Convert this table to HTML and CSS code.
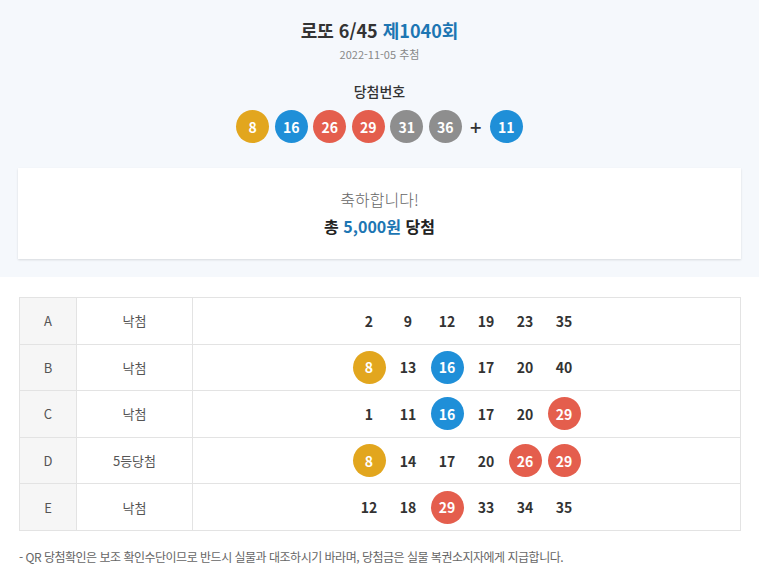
FILE: index.html
```html
<!DOCTYPE html>
<html lang="ko">
<head>
<meta charset="utf-8">
<link rel="stylesheet" href="styles.css">
</head>
<body>
<section class="top">
  <h1 class="title">로또 6/45 <span class="round">제1040회</span></h1>
  <div class="date">2022-11-05 추첨</div>
  <div class="label">당첨번호</div>
  <div class="balls">
    <span class="ball y">8</span>
    <span class="ball b">16</span>
    <span class="ball r">26</span>
    <span class="ball r">29</span>
    <span class="ball g">31</span>
    <span class="ball g">36</span>
    <span class="plus">+</span>
    <span class="ball b">11</span>
  </div>
  <div class="card">
    <div class="congrats">축하합니다!</div>
    <div class="total">총 <span class="amount">5,000원</span> 당첨</div>
  </div>
</section>
<div class="tablewrap">
<table class="games">
  <tr><td class="c1">A</td><td class="c2">낙첨</td><td class="c3"><div class="nums"><span class="n">2</span><span class="n">9</span><span class="n">12</span><span class="n">19</span><span class="n">23</span><span class="n">35</span></div></td></tr>
  <tr><td class="c1">B</td><td class="c2">낙첨</td><td class="c3"><div class="nums"><span class="n ball y">8</span><span class="n">13</span><span class="n ball b">16</span><span class="n">17</span><span class="n">20</span><span class="n">40</span></div></td></tr>
  <tr><td class="c1">C</td><td class="c2">낙첨</td><td class="c3"><div class="nums"><span class="n">1</span><span class="n">11</span><span class="n ball b">16</span><span class="n">17</span><span class="n">20</span><span class="n ball r">29</span></div></td></tr>
  <tr><td class="c1">D</td><td class="c2">5등당첨</td><td class="c3"><div class="nums"><span class="n ball y">8</span><span class="n">14</span><span class="n">17</span><span class="n">20</span><span class="n ball r">26</span><span class="n ball r">29</span></div></td></tr>
  <tr><td class="c1">E</td><td class="c2">낙첨</td><td class="c3"><div class="nums"><span class="n">12</span><span class="n">18</span><span class="n ball r">29</span><span class="n">33</span><span class="n">34</span><span class="n">35</span></div></td></tr>
</table>
</div>
<p class="note">- QR 당첨확인은 보조 확인수단이므로 반드시 실물과 대조하시기 바라며, 당첨금은 실물 복권소지자에게 지급합니다.</p>
</body>
</html>
```
FILE: styles.css
```css
* { box-sizing: border-box; }
body {
  margin: 0;
  font-family: "Noto Sans CJK KR", "Noto Sans", sans-serif;
  color: #333;
  background: #fff;
}
.top {
  background: #f5f8fc;
  padding: 17px 18px 18px;
  text-align: center;
}
.title {
  margin: 0;
  font-size: 18px;
  line-height: 26px;
  font-weight: 700;
  color: #333;
}
.round { color: #1d76b3; }
.date {
  margin-top: 3px;
  font-size: 11px;
  line-height: 16px;
  color: #888;
}
.label {
  margin-top: 19px;
  font-size: 14px;
  line-height: 20px;
  font-weight: 500;
  color: #333;
}
.balls {
  margin-top: 9px;
  display: flex;
  justify-content: center;
  align-items: center;
  gap: 5.5px;
}
.ball {
  display: inline-flex;
  align-items: center;
  justify-content: center;
  width: 33px;
  height: 33px;
  border-radius: 50%;
  color: #fff;
  font-size: 14px;
  font-weight: 700;
}
.y { background: #e2a61e; }
.b { background: #1f8fd8; }
.r { background: #e45e4d; }
.g { background: #8e8e8e; }
.plus {
  width: 17px;
  font-size: 20px;
  font-weight: 500;
  color: #333;
  text-align: center;
  line-height: 33px;
}
.card {
  margin-top: 25px;
  background: #fff;
  height: 91px;
  padding-top: 19px;
  box-shadow: 0 1px 2px rgba(0,0,0,0.12);
}
.congrats {
  font-size: 16px;
  line-height: 24px;
  color: #666;
  font-weight: 300;
}
.total {
  margin-top: 3px;
  font-size: 16px;
  line-height: 24px;
  font-weight: 700;
  color: #222;
}
.amount { color: #1d76b3; }
.tablewrap {
  padding: 20px 18px 0 19px;
}
.games {
  width: 100%;
  border-collapse: collapse;
  font-size: 13px;
}
.games td {
  border: 1px solid #e3e3e3;
  height: 46.6px;
  padding: 0;
  text-align: center;
  color: #555;
}
.c1 { width: 57px; background: #f6f6f6; }
.c2 { width: 116px; }
.nums {
  display: flex;
  justify-content: center;
  align-items: center;
}
.n {
  width: 33px;
  height: 33px;
  margin: 0 3px;
  display: inline-flex;
  align-items: center;
  justify-content: center;
  font-size: 14px;
  font-weight: 700;
  color: #333;
}
.n.ball { color: #fff; }
.note {
  margin: 17px 0 0 19px;
  font-size: 12px;
  line-height: 18px;
  color: #666;
  letter-spacing: -0.5px;
}
```
